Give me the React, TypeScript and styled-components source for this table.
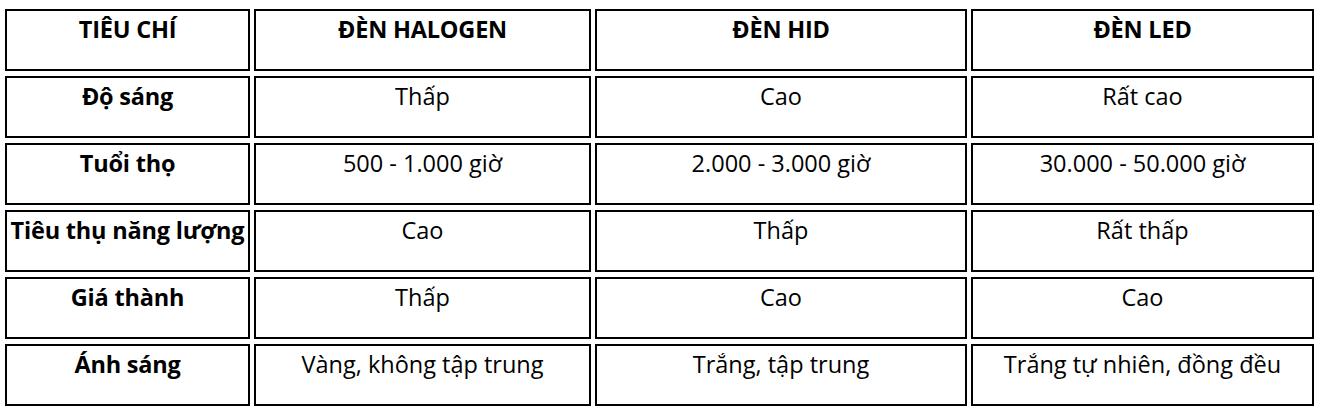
import React from 'react'
import styled, { createGlobalStyle } from 'styled-components'

const GlobalStyle = createGlobalStyle`
  body {
    margin: 0;
    background: #ffffff;
    font-family: 'Open Sans', 'Noto Sans', sans-serif;
    color: #000000;
  }
`

const Wrapper = styled.div`
  padding: 4px 0 0 1px;
`

const Table = styled.table`
  width: 1317px;
  border-collapse: separate;
  border-spacing: 4px 5px;
  table-layout: fixed;
`

const Col = styled.col<{ $width: number }>`
  width: ${(p) => p.$width}px;
`

const Cell = styled.td<{ $bold?: boolean }>`
  height: 62px;
  box-sizing: border-box;
  border: 2px solid #000;
  padding: 1px 0 0 0;
  vertical-align: top;
  text-align: center;
  font-size: 23.5px;
  line-height: 34px;
  font-weight: ${(p) => (p.$bold ? 700 : 400)};
  letter-spacing: ${(p) => (p.$bold ? '-0.2px' : '0')};
  white-space: nowrap;
  overflow: visible;
`

const widths = [245, 337, 372, 343]

const header = ['TIÊU CHÍ', 'ĐÈN HALOGEN', 'ĐÈN HID', 'ĐÈN LED']

const rows = [
  ['Độ sáng', 'Thấp', 'Cao', 'Rất cao'],
  ['Tuổi thọ', '500 - 1.000 giờ', '2.000 - 3.000 giờ', '30.000 - 50.000 giờ'],
  ['Tiêu thụ năng lượng', 'Cao', 'Thấp', 'Rất thấp'],
  ['Giá thành', 'Thấp', 'Cao', 'Cao'],
  ['Ánh sáng', 'Vàng, không tập trung', 'Trắng, tập trung', 'Trắng tự nhiên, đồng đều'],
]

const App = () => {
  return (
    <>
      <GlobalStyle />
      <Wrapper>
        <Table>
          <colgroup>
            {widths.map((w, i) => (
              <Col key={i} $width={w} />
            ))}
          </colgroup>
          <tbody>
            <tr>
              {header.map((h) => (
                <Cell key={h} $bold>
                  {h}
                </Cell>
              ))}
            </tr>
            {rows.map((row) => (
              <tr key={row[0]}>
                {row.map((c, i) => (
                  <Cell key={i} $bold={i === 0}>
                    {c}
                  </Cell>
                ))}
              </tr>
            ))}
          </tbody>
        </Table>
      </Wrapper>
    </>
  )
}

export default App
